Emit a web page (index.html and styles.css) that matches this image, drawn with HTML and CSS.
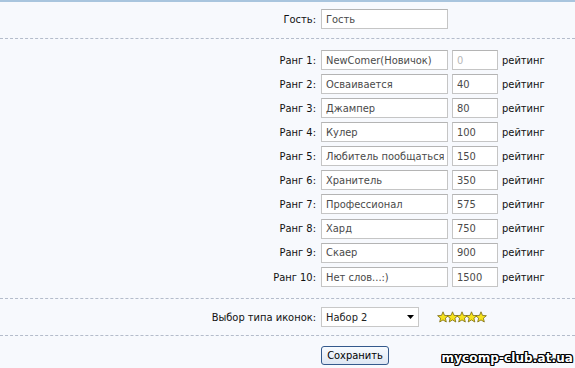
FILE: index.html
```html
<!DOCTYPE html>
<html lang="ru">
<head>
  <meta charset="UTF-8">
  <title>Настройки рангов</title>
  <link rel="stylesheet" href="styles.css">
</head>
<body>
  <div class="page">
    <div class="section guest">
      <div class="row">
        <label class="lbl">Гость:</label>
        <input class="name" type="text" value="Гость">
      </div>
    </div>

    <div class="section ranks">
      <div class="row"><label class="lbl">Ранг 1:</label><input class="name" value="NewComer(Новичок)"><input class="num" value="0" disabled><span class="unit">рейтинг</span></div>
      <div class="row"><label class="lbl">Ранг 2:</label><input class="name" value="Осваивается"><input class="num" value="40"><span class="unit">рейтинг</span></div>
      <div class="row"><label class="lbl">Ранг 3:</label><input class="name" value="Джампер"><input class="num" value="80"><span class="unit">рейтинг</span></div>
      <div class="row"><label class="lbl">Ранг 4:</label><input class="name" value="Кулер"><input class="num" value="100"><span class="unit">рейтинг</span></div>
      <div class="row"><label class="lbl">Ранг 5:</label><input class="name" value="Любитель пообщаться"><input class="num" value="150"><span class="unit">рейтинг</span></div>
      <div class="row"><label class="lbl">Ранг 6:</label><input class="name" value="Хранитель"><input class="num" value="350"><span class="unit">рейтинг</span></div>
      <div class="row"><label class="lbl">Ранг 7:</label><input class="name" value="Профессионал"><input class="num" value="575"><span class="unit">рейтинг</span></div>
      <div class="row"><label class="lbl">Ранг 8:</label><input class="name" value="Хард"><input class="num" value="750"><span class="unit">рейтинг</span></div>
      <div class="row"><label class="lbl">Ранг 9:</label><input class="name" value="Скаер"><input class="num" value="900"><span class="unit">рейтинг</span></div>
      <div class="row"><label class="lbl">Ранг 10:</label><input class="name" value="Нет слов...:)"><input class="num" value="1500"><span class="unit">рейтинг</span></div>
    </div>

    <div class="section icons">
      <div class="row">
        <label class="lbl">Выбор типа иконок:</label>
        <div class="select">
          <span>Набор 2</span>
          <svg width="7" height="4" viewBox="0 0 7 4"><path d="M0 0h7L3.5 4z" fill="#000"/></svg>
        </div>
        <svg class="stars" width="50" height="13" viewBox="0 0 50 13">
          <g fill="#f6e21c" stroke="#7a6a10" stroke-width="0.8" stroke-linejoin="round">
            <path id="st" d="M6 0.8l1.5 3.6 3.9 0.3-3 2.5 0.9 3.8L6 8.9 2.7 11l0.9-3.8-3-2.5 3.9-0.3z"/>
            <use href="#st" x="9.5"/>
            <use href="#st" x="19"/>
            <use href="#st" x="28.5"/>
            <use href="#st" x="38"/>
          </g>
        </svg>
      </div>
    </div>

    <div class="actions">
      <button type="button">Сохранить</button>
    </div>

    <div class="watermark">mycomp-club.at.ua</div>
  </div>
</body>
</html>
```

FILE: styles.css
```css
body {
  margin: 0;
  background: #f7f9fd;
  font-family: Tahoma, "DejaVu Sans Condensed", sans-serif;
  font-size: 11px;
  color: #111;
}

.page {
  position: relative;
  height: 368px;
  border-top: 2px solid #a9c5de;
  box-sizing: border-box;
  overflow: hidden;
}

.section {
  border-bottom: 1px dashed #b4bccb;
}

.guest {
  padding: 5px 0 7px;
}

.ranks {
  padding: 9px 0 9px;
}

.icons {
  padding: 6px 0 6px;
}

.row {
  display: flex;
  align-items: center;
  height: 24px;
}

.ranks .row:nth-child(n+6) {
  height: 24.25px;
}

.lbl {
  width: 321px;
  text-align: right;
  padding-right: 5px;
  box-sizing: border-box;
  flex-shrink: 0;
}

input {
  font-family: Tahoma, "DejaVu Sans Condensed", sans-serif;
  font-size: 11px;
  color: #4a4a4a;
  background: #fff;
  border: 1px solid #c5c5c5;
  border-top-color: #b4b4b4;
  height: 20px;
  padding: 0 3px 0 4px;
  box-sizing: border-box;
  margin: 0;
}

.name {
  width: 127px;
}

.num {
  width: 46px;
  margin-left: 4px;
}

.num:disabled {
  color: #b8b8b8;
}

.unit {
  margin-left: 4px;
}

.select {
  width: 98px;
  height: 20px;
  background: #fff;
  border: 1px solid #c8c8c8;
  box-sizing: border-box;
  display: flex;
  align-items: center;
  justify-content: space-between;
  padding: 0 4px 0 4px;
  color: #222;
}

.stars {
  margin-left: 18px;
}

.actions {
  padding: 10px 0 0 321px;
}

button {
  font-family: Tahoma, "DejaVu Sans Condensed", sans-serif;
  font-size: 11px;
  height: 19px;
  width: 68px;
  padding: 0;
  border: 1px solid #34598c;
  border-radius: 3px;
  background: linear-gradient(#f8fbff, #dde6f2);
  color: #000;
}

.watermark {
  position: absolute;
  right: 2px;
  bottom: 3px;
  font-family: "DejaVu Sans", sans-serif;
  font-weight: bold;
  font-size: 12px;
  letter-spacing: 0.1px;
  color: #fff;
  text-shadow: 1px 0 0 #000, -1px 0 0 #000, 0 1px 0 #000, 0 -1px 0 #000,
    1px 1px 0 #000, -1px -1px 0 #000, 1px -1px 0 #000, -1px 1px 0 #000;
}
```
